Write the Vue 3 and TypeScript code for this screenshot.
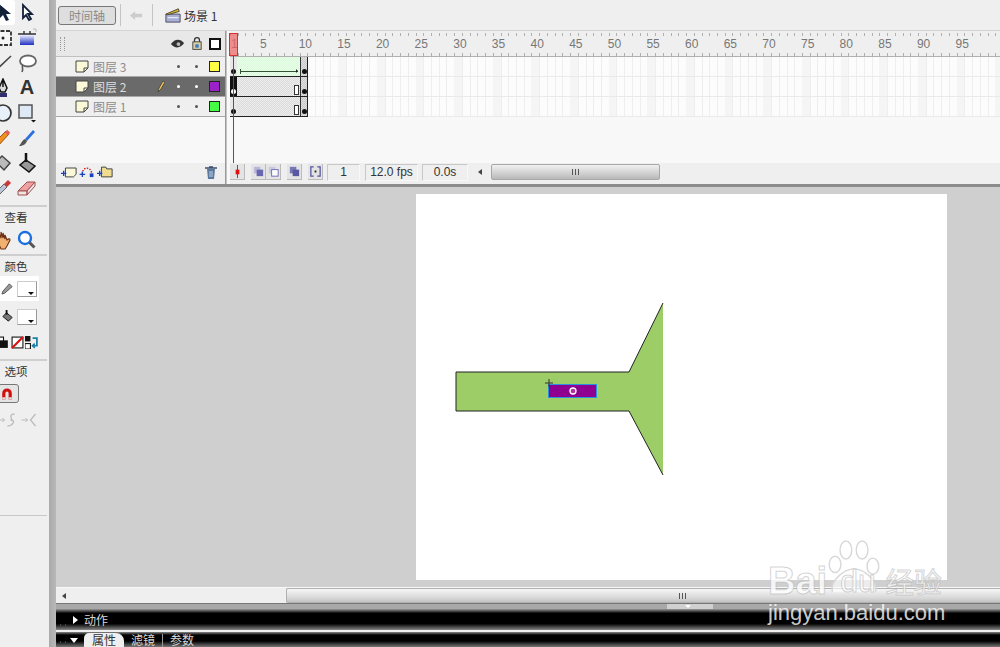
<template>
  <div class="app">
    <!-- tools -->
    <aside class="tools">
      <div class="tool-grid">
        <span class="tool on"><svg viewBox="0 0 20 20"><path d="M6 1v15l4-4 3 6 3-1-3-6h5z" fill="#12203a" /></svg></span>
        <span class="tool"><svg viewBox="0 0 20 20"><path d="M6 2v13l3-3 3 5 2-1-3-5h4z" fill="#fff" stroke="#12203a" stroke-width="1.800" /></svg></span>
        <span class="tool"><svg viewBox="0 0 20 20"><rect x="2" y="3" width="16" height="14" fill="#f6f6f6" stroke="#333" stroke-width="1.800" stroke-dasharray="4 1.500" /><circle cx="10" cy="10" r="1.500" fill="#222" /></svg></span>
        <span class="tool"><svg viewBox="0 0 20 20"><rect x="3" y="7" width="14" height="10" fill="url(#grad)" /><path d="M1 6h18M7 3v3M13 3v3" stroke="#333" stroke-width="1.400" /><path d="M16 1h3v3" fill="none" stroke="#bbb" /><defs><linearGradient id="grad" x1="0" x2="0" y1="0" y2="1"><stop offset="0" stop-color="#eef" /><stop offset="1" stop-color="#2030c0" /></linearGradient></defs></svg></span>
        <span class="tool"><svg viewBox="0 0 20 20"><path d="M1 19L18 3" stroke="#444" stroke-width="1.500" /></svg></span>
        <span class="tool"><svg viewBox="0 0 20 20"><ellipse cx="11" cy="8" rx="8" ry="5.500" fill="#fff" stroke="#666" stroke-width="1.800" /><path d="M6 12c-2 2 1 3-1 7" fill="none" stroke="#555" stroke-width="1.600" /></svg></span>
        <span class="tool"><svg viewBox="0 0 20 20"><path d="M10 1l4 9-2 4H8l-2-4zM10 2v7" fill="#ddd" stroke="#111" stroke-width="1.500" /><path d="M6 15h8v4H6z" fill="#303070" /></svg></span>
        <span class="tool letter">A</span>
        <span class="tool"><svg viewBox="0 0 20 20"><circle cx="10" cy="10" r="8" fill="#e8f0fa" stroke="#333" stroke-width="1.700" /></svg></span>
        <span class="tool"><svg viewBox="0 0 20 20"><rect x="2" y="2" width="13" height="13" fill="#dfe9f6" stroke="#555" stroke-width="1.500" /><path d="M14 17h5l-2.500 2.500z" fill="#111" /></svg></span>
        <span class="tool"><svg viewBox="0 0 20 20"><path d="M1 15L13 3l3 3L5 18l-4 1z" fill="#f09020" stroke="#a05010" /><path d="M13 3l3 3" stroke="#e06060" stroke-width="3.500" /></svg></span>
        <span class="tool"><svg viewBox="0 0 20 20"><path d="M8 11L16 2l2 2-8 9z" fill="#2a70e0" /><path d="M8 11l2 2c-1 3-4 5-8 5 2-2 3-6 6-7z" fill="#555" /></svg></span>
        <span class="tool"><svg viewBox="0 0 20 20"><path d="M9 3l8 7-6 7-8-8z" fill="#bbb" stroke="#444" stroke-width="1.500" /><path d="M3 8c-2 3-1 5 0 7" fill="none" stroke="#555" stroke-width="2.400" /></svg></span>
        <span class="tool"><svg viewBox="0 0 20 20"><path d="M9 7l9 6-6 6-9-7z" fill="#999" stroke="#111" stroke-width="1.500" /><path d="M9 0v9" stroke="#111" stroke-width="2.500" /></svg></span>
        <span class="tool"><svg viewBox="0 0 20 20"><path d="M2 19l2-6 7-7 3 3-7 7z" fill="#b8c4d8" stroke="#666" /><path d="M11 6l4-4 3 3-4 4z" fill="#c83838" /></svg></span>
        <span class="tool"><svg viewBox="0 0 20 20"><path d="M1 13l9-9h8l-8 9z" fill="#f0a0a0" stroke="#a05050" /><path d="M1 13h9v4H1zM10 13l8-9v4l-8 9z" fill="#efe4e4" stroke="#a05050" /></svg></span>
      </div>

      <h4 class="tool-title first">查看</h4>
      <div class="tool-grid one">
        <span class="tool"><svg viewBox="0 0 20 20"><path d="M4 10V6l2 3V3l2 5V2l2 6V3l2 6V5l2 5c2-2 3-1 3 0l-3 6-2 3H8z" fill="#f0b070" stroke="#703010" stroke-width="1.100" /></svg></span>
        <span class="tool"><svg viewBox="0 0 20 20"><circle cx="8" cy="8" r="6" fill="#fff" stroke="#1a70e0" stroke-width="2.400" /><path d="M12.500 12.500l5 5" stroke="#555" stroke-width="3" /></svg></span>
      </div>

      <h4 class="tool-title">颜色</h4>
      <div class="color-row white">
        <svg class="mini" viewBox="0 0 14 14"><path d="M2 10l7-8 3 3-8 7-3 1z" fill="#999" stroke="#555" /></svg>
        <span class="swatch"></span>
      </div>
      <div class="color-row">
        <svg class="mini" viewBox="0 0 14 14"><path d="M6 3l6 5-4 4-6-5z" fill="#777" stroke="#111" /><path d="M6 0v5" stroke="#111" stroke-width="2" /></svg>
        <span class="swatch"></span>
      </div>
      <div class="mini-row">
        <svg class="mini" viewBox="0 0 12 12"><rect x="-2" y="1" width="8" height="8" fill="#fff" stroke="#111" /><rect x="1" y="4" width="9" height="7" fill="#111" /></svg>
        <svg class="mini" viewBox="0 0 12 12"><rect x="1" y="1" width="10" height="10" fill="#fff" stroke="#111" /><path d="M1 11L11 1" stroke="#e01010" stroke-width="2" /></svg>
        <svg class="mini" viewBox="0 0 12 12"><rect x="0" y="0" width="5" height="5" fill="#111" /><rect x="0" y="7" width="5" height="5" fill="#fff" stroke="#111" /><path d="M7 2h4v7H7M9 7l-2 2 2 2" fill="none" stroke="#1880a8" stroke-width="1.600" /></svg>
      </div>

      <h4 class="tool-title options">选项</h4>
      <span class="magnet">
        <svg viewBox="0 0 20 20"><path d="M4 17V9a6 6 0 0 1 12 0v8h-4V9a2 2 0 0 0-4 0v8z" fill="#d01010" /><path d="M4 14h4v3H4zM12 14h4v3h-4z" fill="#ddd" /></svg>
      </span>
      <div class="gray-row">
        <svg viewBox="0 0 20 14"><path d="M0 7h6M4 5l2 2-2 2" stroke="#bbb" fill="none" /><path d="M16 1c-7 0-1 6-4 6 6 0 2 6-3 6" stroke="#bbb" fill="none" stroke-width="1.300" /></svg>
        <svg viewBox="0 0 20 14"><path d="M1 7h6M5 5l2 2-2 2" stroke="#bbb" fill="none" /><path d="M15 1L10 7l5 6" stroke="#bbb" fill="none" stroke-width="1.300" /></svg>
      </div>
      <hr class="tool-end" />
    </aside>

    <div class="splitter"></div>

    <main class="main">
      <!-- edit bar -->
      <header class="editbar">
        <button class="tl-btn">时间轴</button>
        <i class="vsep"></i>
        <svg class="back" viewBox="0 0 16 12"><path d="M1 6l6-5v3h8v4H7v3z" fill="#ccc" /></svg>
        <i class="vsep"></i>
        <svg class="scene-icon" viewBox="0 0 18 18"><path d="M1 8h16v9H1z" fill="#a8b0d8" stroke="#445" /><path d="M1 8L15 2l1 3L2 9z" fill="#d8b030" stroke="#443" /><path d="M3 12h12" stroke="#fff" /></svg>
        <span class="scene">场景 1</span>
      </header>

      <!-- timeline -->
      <section class="timeline">
        <div class="tl-left">
          <div class="layer-head">
            <i class="grip"></i>
            <svg class="eye" viewBox="0 0 16 10"><path d="M1 5c4-6 10-6 14-1-4 6-10 6-14 1z" fill="#333" /><circle cx="9" cy="5" r="2" fill="#bbb" /></svg>
            <svg class="lock" viewBox="0 0 12 14"><rect x="1" y="5" width="10" height="9" fill="#d8d0a0" stroke="#333" /><path d="M3 5V3a3 3 0 0 1 6 0v2" fill="none" stroke="#333" stroke-width="1.500" /><rect x="4" y="8" width="4" height="4" fill="#3878c8" /></svg>
            <span class="outline-all"></span>
          </div>
          <div v-for="l in layers" :key="l.name" class="layer" :class="{ active: l.active }">
            <svg class="page" viewBox="0 0 14 13"><path d="M1 1h12v7l-4 4H1z" fill="#fbf8d8" stroke="#444" /><path d="M9 12V8h4" fill="none" stroke="#444" /></svg>
            <span class="layer-name">{{ l.name }}</span>
            <svg v-if="l.active" class="pencil" viewBox="0 0 8 13"><path d="M1 12l1-4 4-7 2 1-4 7z" fill="#e8c060" stroke="#333" stroke-width=".7" /></svg>
            <b class="dot"></b>
            <b class="dot"></b>
            <span class="swatch-sq" :style="{ background: l.color }"></span>
          </div>
          <div class="layer-fill"></div>
          <div class="layer-tools">
            <svg viewBox="0 0 18 13"><path d="M5 2h12v7l-3 3H5z" fill="#fbf8d8" stroke="#333" /><path d="M0 8h6M3 5v6" stroke="#1840c0" stroke-width="1.500" /></svg>
            <svg viewBox="0 0 16 13"><path d="M3 9C3 1 11 0 13 7" fill="none" stroke="#d01010" stroke-dasharray="1.500 1.500" stroke-width="1.500" /><path d="M0 9h6M3 6v6" stroke="#1840c0" stroke-width="1.400" /><rect x="11" y="8" width="4" height="4" fill="#1840c0" /></svg>
            <svg viewBox="0 0 18 13"><path d="M5 1h5l1 2h6v9H5z" fill="#f0dc90" stroke="#333" /><path d="M0 8h6M3 5v6" stroke="#1840c0" stroke-width="1.500" /></svg>
            <svg class="trash" viewBox="0 0 12 13"><path d="M2 3h8l-1 10H3z" fill="#5878a0" /><path d="M0 2h12M4 1h4" stroke="#3c5070" stroke-width="1.300" /><path d="M5 5v6M7 5v6" stroke="#c8d4e0" /></svg>
          </div>
        </div>

        <div class="tl-right">
          <div class="ruler">
            <span class="ruler-one">1</span>
            <span v-for="n in rulerMarks" :key="n" class="mark">{{ n }}</span>
          </div>
          <div v-for="l in layers" :key="l.name" class="frames">
            <div class="span-block">
              <div class="first-frame" :class="{ black: l.active }"><i></i></div>
              <div class="span-body" :class="{ tween: l.tween }">
                <i v-if="l.tween" class="arrow"></i>
                <i v-else class="hold"></i>
              </div>
              <div class="last-frame"><i></i></div>
            </div>
          </div>
          <div class="frames-fill"></div>
          <div class="tl-status">
            <span class="st-btn"><svg viewBox="0 0 14 14"><path d="M7 0v14" stroke="#e01010" /><rect x="5" y="5" width="4" height="5" fill="#e01010" /></svg></span>
            <span class="st-gap"></span>
            <span class="st-btn"><svg viewBox="0 0 14 14"><rect x="2" y="2" width="7" height="7" fill="#b8b8d8" /><rect x="5" y="5" width="7" height="7" fill="#6868b0" /></svg></span>
            <span class="st-btn"><svg viewBox="0 0 14 14"><rect x="2" y="2" width="7" height="7" fill="#c8c8e0" /><rect x="5" y="5" width="7" height="7" fill="#fff" stroke="#6868b0" /></svg></span>
            <span class="st-gap"></span>
            <span class="st-btn"><svg viewBox="0 0 14 14"><rect x="2" y="2" width="7" height="7" fill="#7878b8" /><rect x="5" y="5" width="7" height="7" fill="#5858a0" /></svg></span>
            <span class="st-gap"></span>
            <span class="st-btn"><svg viewBox="0 0 14 14"><path d="M5 2H2v10h3M9 2h3v10H9" fill="none" stroke="#5050a0" stroke-width="1.300" /><rect x="6" y="6" width="2" height="2" fill="#222" /></svg></span>
            <span class="field w33">1</span>
            <span class="field w53">12.0 fps</span>
            <span class="field w45">0.0s</span>
            <i class="arrow-left"></i>
            <span class="thumb wide"><i class="ticks"></i></span>
          </div>
          <!-- playhead lies over the frames -->
          <i class="head"></i>
          <i class="head-line"></i>
        </div>
      </section>

      <!-- stage -->
      <section class="stage">
        <div class="canvas">
          <svg class="drawing" viewBox="0 0 531 386">
            <polygon points="40,178 213,178 247,109 247,281 213,217 40,217" fill="#9ccd66" />
            <polyline points="247,109 213,178 40,178 40,217 213,217 247,281" fill="none" stroke="#222" />
            <rect x="132.500" y="190.500" width="48" height="13" fill="#8f0090" stroke="#2a90e0" />
            <circle cx="157" cy="197" r="3" fill="#b030a0" stroke="#fff" stroke-width="1.300" />
            <path d="M133 185v8M129 189h8" stroke="#333" />
          </svg>
        </div>
      </section>
      <div class="h-scroll">
        <i class="arrow-left"></i>
        <span class="thumb-h"><i class="ticks"></i></span>
      </div>

      <div class="collapse-bar"><span class="collapse-tab"></span></div>

      <!-- panels -->
      <div class="panel">
        <i class="dots"></i>
        <i class="tri-right"></i>
        <span class="panel-title">动作</span>
      </div>
      <div class="panel props">
        <i class="dots"></i>
        <i class="tri-down"></i>
        <span class="tab-on">属性</span>
        <span class="tab-off">滤镜</span>
        <i class="tab-sep"></i>
        <span class="tab-off">参数</span>
      </div>

      <!-- watermark -->
      <div class="watermark">
        <svg class="paw" viewBox="0 0 60 62">
          <g fill="#fff" fill-opacity=".6" stroke="#d8d8d8" stroke-width="1.600">
            <ellipse cx="9" cy="27" rx="6.500" ry="9" />
            <ellipse cx="21" cy="11" rx="6.500" ry="10" />
            <ellipse cx="39" cy="11" rx="6.500" ry="10" />
            <ellipse cx="51" cy="29" rx="6.500" ry="9" />
            <path d="M6 58c-3-14 14-26 24-26s27 12 24 26" />
          </g>
        </svg>
        <div class="wm-logo">
          <span class="bai">Bai</span>
          <span class="du">du</span>
          <span class="wm-cn">经验</span>
        </div>
        <div class="wm-url">jingyan.baidu.com</div>
      </div>
    </main>
  </div>
</template>

<script setup lang="ts">
interface Layer {
  name: string;
  color: string;
  active: boolean;
  tween: boolean;
}

const layers: Layer[] = [
  { name: '图层 3', color: '#ffff44', active: false, tween: true },
  { name: '图层 2', color: '#9a22c8', active: true, tween: false },
  { name: '图层 1', color: '#44ff44', active: false, tween: false }
];

const rulerMarks: number[] = [];
for (let n = 5; n <= 95; n += 5) rulerMarks.push(n);
</script>

<style>
html, body { margin: 0; background: #efefef; }
</style>

<style scoped>
.app {
  width: 1000px;
  height: 647px;
  display: flex;
  overflow: hidden;
  font-family: "Noto Sans CJK SC", "Liberation Sans", sans-serif;
  font-size: 12px;
  color: #333;
  background: #efefef;
}

/* tools */
.tools {
  width: 49px;
  flex: none;
  overflow: hidden;
  display: flex;
  flex-direction: column;
  background: #efefef;
}
.tool-grid {
  display: grid;
  grid-template-columns: 24px 24px;
  grid-auto-rows: 25px;
  margin-left: -9px;
}
.tool-grid.one { margin-bottom: 2px; }
.tool {
  display: flex;
  align-items: center;
  justify-content: center;
  width: 24px;
  height: 25px;
}
.tool svg { width: 20px; height: 20px; flex: none; }
.tool.on { background: #fff; border-radius: 0 3px 3px 0; }
.letter {
  font: bold 20px "Liberation Sans", sans-serif;
  color: #333;
}
.tool-title {
  margin: 0 2px 0 0;
  padding-right: 15px;
  border-top: 2px solid #cfcfcf;
  height: 20px;
  line-height: 20px;
  text-align: center;
  font-size: 11.500px;
  font-weight: normal;
  color: #333;
}
.tool-title.first { margin-top: 5px; }
.tool-title.options { margin-top: 7px; }
.color-row {
  height: 25px;
  display: flex;
  align-items: center;
  gap: 3px;
  padding-left: 1px;
  margin-bottom: 3px;
}
.color-row.white { background: #fff; width: 38px; }
.mini { width: 13px; height: 13px; flex: none; }
.swatch {
  position: relative;
  width: 18px;
  height: 14px;
  background: #fff;
  border: 1px solid #ccc;
  border-right-color: #999;
  border-bottom-color: #999;
}
.swatch::after {
  content: "";
  position: absolute;
  right: 2px;
  bottom: 1px;
  border: 3px solid transparent;
  border-top-color: #111;
  border-bottom: 0;
}
.mini-row {
  display: flex;
  gap: 1px;
  margin-left: -3px;
  height: 20px;
  align-items: center;
}
.magnet {
  width: 22px;
  height: 17px;
  margin-left: -5px;
  margin-top: 3px;
  border: 1px solid #777;
  border-radius: 3px;
  background: #e4e4e4;
  display: flex;
  align-items: center;
  justify-content: center;
}
.magnet svg { width: 16px; height: 16px; }
.gray-row {
  display: flex;
  margin-top: 10px;
  gap: 1px;
  margin-left: -2px;
}
.gray-row svg { width: 21px; height: 14px; flex: none; }
.tool-end {
  margin: 88px 2px 0 0;
  border: 0;
  border-top: 1px solid #c8c8c8;
}

.splitter {
  width: 7px;
  flex: none;
  background: linear-gradient(to right, #aaa, #b8b8b8);
}

/* main */
.main {
  position: relative;
  flex: 1;
  min-width: 0;
  display: flex;
  flex-direction: column;
}
.editbar {
  height: 31px;
  flex: none;
  display: flex;
  align-items: center;
  padding-left: 2px;
  background: #efefef;
  border-bottom: 1px solid #d4d4d4;
  box-sizing: border-box;
}
.tl-btn {
  width: 58px;
  height: 19px;
  padding: 0;
  border: 1px solid #777;
  border-radius: 3px;
  background: #dedede;
  color: #8a8a8a;
  font: 12px "Noto Sans CJK SC", sans-serif;
}
.vsep {
  width: 1px;
  height: 22px;
  margin: 0 5px 0 4px;
  background: #c4c4c4;
}
.back { width: 14px; height: 11px; margin: 0 5px 0 3px; }
.scene-icon { width: 16px; height: 16px; margin-left: 7px; }
.scene { margin-left: 3px; font-size: 12px; color: #333; }

/* timeline */
.timeline {
  height: 153px;
  flex: none;
  display: flex;
  border-bottom: 3px solid #8c8c8c;
  background: #f5f5f5;
}
.tl-left {
  width: 169px;
  flex: none;
  display: flex;
  flex-direction: column;
  border-right: 1px solid #9a9a9a;
}
.layer-head {
  height: 26px;
  flex: none;
  display: flex;
  align-items: center;
  border-bottom: 1px solid #c0c0c0;
  background: #e8e8e8;
  box-sizing: border-box;
}
.grip {
  width: 3px;
  height: 14px;
  margin-left: 4px;
  border-left: 1px dotted #999;
  border-right: 1px dotted #999;
}
.eye { width: 15px; height: 10px; margin-left: auto; }
.lock { width: 10px; height: 13px; margin-left: 7px; }
.outline-all {
  width: 8px;
  height: 8px;
  margin: 0 4px 0 7px;
  border: 2px solid #111;
  background: #fff;
}
.layer {
  height: 20px;
  flex: none;
  display: flex;
  align-items: center;
  padding: 0 5px 0 19px;
  border-bottom: 1px solid #a8a8a8;
  box-sizing: border-box;
  background: #efefef;
  color: #8c8c8c;
}
.layer.active { background: #6a6a6a; color: #ddd; }
.page { width: 14px; height: 13px; flex: none; }
.layer-name { margin-left: 4px; font-size: 12px; white-space: nowrap; }
.pencil { position: absolute; left: 101px; width: 8px; height: 13px; }
.dot {
  width: 3px;
  height: 3px;
  border-radius: 50%;
  background: #555;
}
.active .dot { background: #fff; }
.layer-name + .dot,
.pencil + .dot { margin-left: auto; }
.dot + .dot { margin-left: 15px; }
.swatch-sq {
  width: 9px;
  height: 9px;
  margin-left: 11px;
  border: 1px solid #222;
}
.layer-fill { flex: 1; background: #f8f8f8; }
.layer-tools {
  height: 21px;
  flex: none;
  display: flex;
  align-items: center;
  gap: 2px;
  padding: 0 0 3px 5px;
  box-sizing: border-box;
  background: #efefef;
}
.layer-tools svg { width: 16px; height: 12px; }
.layer-tools .trash { margin-left: auto; margin-right: 8px; width: 12px; height: 13px; }

.tl-right {
  position: relative;
  flex: 1;
  min-width: 0;
  display: flex;
  flex-direction: column;
  padding-left: 3px;
  border-left: 1px solid #c4c4c4;
  background: #f8f8f8;
}
.ruler {
  height: 26px;
  flex: none;
  display: flex;
  align-items: center;
  font: 12px "Liberation Sans", sans-serif;
  color: #777;
  background:
    repeating-linear-gradient(to right, #b0b0b0 0 1px, transparent 1px 7.730px) 0 2px / 100% 3px no-repeat,
    repeating-linear-gradient(to right, #b0b0b0 0 1px, transparent 1px 7.730px) 0 100% / 100% 3px no-repeat,
    #efefef;
  border-bottom: 1px solid #b0b0b0;
  box-sizing: border-box;
}
.ruler-one {
  width: 29px;
  padding-left: 1px;
  box-sizing: border-box;
  flex: none;
}
.mark {
  width: 38.650px;
  flex: none;
  text-align: left;
  padding-left: 1px;
  box-sizing: border-box;
}
.head {
  position: absolute;
  left: 2px;
  top: 2px;
  width: 7px;
  height: 21px;
  background: rgba(240, 100, 100, .7);
  border: 1px solid #d83030;
}
.head-line {
  position: absolute;
  left: 6px;
  top: 25px;
  width: 1px;
  height: 107px;
  background: #e81818;
}
.frames {
  height: 20px;
  flex: none;
  box-sizing: border-box;
  border-bottom: 1px solid #eaeaea;
  background:
    repeating-linear-gradient(to right, transparent 0 30.920px, #f5f5f5 30.920px 38.650px),
    repeating-linear-gradient(to right, #eeeeee 0 1px, #fcfcfc 1px 7.730px);
}
.span-block {
  width: 78px;
  height: 20px;
  display: flex;
  border-bottom: 1px solid #222;
  box-sizing: border-box;
}
.first-frame {
  width: 7px;
  flex: none;
  position: relative;
  background: #e8e8e8;
}
.first-frame.black { background: #111; }
.first-frame i,
.last-frame i {
  position: absolute;
  left: 1px;
  bottom: 2px;
  width: 5px;
  height: 5px;
  border-radius: 50%;
  background: #111;
}
.first-frame.black i { background: #fff; }
.span-body {
  position: relative;
  flex: 1;
  background: repeating-conic-gradient(#dadada 0 25%, #eeeeee 0 50%) 0 0 / 2px 2px;
}
.span-body.tween {
  background: repeating-conic-gradient(#dcf8dc 0 25%, #e8ffe8 0 50%) 0 0 / 2px 2px;
}
.arrow {
  position: absolute;
  left: 3px;
  right: 2px;
  bottom: 4px;
  height: 1px;
  background: #335533;
}
.arrow::before {
  content: "";
  position: absolute;
  left: 0;
  top: -2px;
  width: 1px;
  height: 5px;
  background: #335533;
}
.arrow::after {
  content: "";
  position: absolute;
  right: 0;
  top: -2px;
  border: 2.500px solid transparent;
  border-left-color: #222;
  border-right: 0;
}
.hold {
  position: absolute;
  right: 1px;
  bottom: 1px;
  width: 3px;
  height: 8px;
  background: #fff;
  border: 1px solid #333;
}
.last-frame {
  position: relative;
  width: 8px;
  flex: none;
  box-sizing: border-box;
  border-left: 1px solid #333;
  border-right: 1px solid #222;
  background: repeating-conic-gradient(#c8c8c8 0 25%, #e0e0e0 0 50%) 0 0 / 2px 2px;
}
.frames-fill {
  flex: 1;
  background: #f8f8f8;
}
.tl-status {
  height: 21px;
  flex: none;
  display: flex;
  align-items: center;
  padding-bottom: 3px;
  box-sizing: border-box;
  background: #efefef;
  font: 12px "Liberation Sans", sans-serif;
  color: #333;
}
.st-btn {
  width: 14px;
  height: 15px;
  flex: none;
  display: flex;
  align-items: center;
  justify-content: center;
  background: #e4e4e4;
  border-right: 1px solid #bbb;
  border-bottom: 1px solid #bbb;
}
.st-btn svg { width: 13px; height: 13px; }
.st-gap { width: 6px; flex: none; }
.field {
  height: 15px;
  line-height: 15px;
  margin-left: 4px;
  text-align: center;
  border: 1px solid #c8c8c8;
  border-right-color: #f8f8f8;
  border-bottom-color: #f8f8f8;
  flex: none;
}
.w33 { width: 31px; }
.w53 { width: 51px; margin-left: 5px; }
.w45 { width: 44px; }
.arrow-left {
  flex: none;
  margin-left: 10px;
  border: 3px solid transparent;
  border-right: 4px solid #444;
  border-left: 0;
}
.thumb {
  display: flex;
  align-items: center;
  justify-content: center;
  flex: none;
  margin-left: 9px;
  height: 14px;
  border: 1px solid #a8a8a8;
  border-radius: 2px;
  background: linear-gradient(#f0f0f0, #d0d0d0 60%, #b8b8b8);
}
.thumb.wide { width: 167px; }
.ticks {
  width: 5px;
  height: 6px;
  border-left: 1px solid #555;
  border-right: 1px solid #555;
  position: relative;
}
.ticks::after {
  content: "";
  position: absolute;
  left: 2px;
  top: 0;
  width: 1px;
  height: 6px;
  background: #555;
}

/* stage */
.stage {
  flex: 1;
  min-height: 0;
  padding: 7px 53px 0 360px;
  background: #cfcfcf;
  overflow: hidden;
}
.canvas {
  width: 531px;
  height: 386px;
  background: #fff;
}
.drawing { display: block; width: 531px; height: 386px; }
.h-scroll {
  height: 16px;
  flex: none;
  display: flex;
  align-items: center;
  background: #efefef;
  border-top: 1px solid #f8f8f8;
  box-sizing: border-box;
}
.h-scroll .arrow-left { margin-left: 6px; }
.thumb-h {
  margin-left: 220px;
  flex: 1;
  height: 15px;
  display: flex;
  align-items: center;
  padding-left: 392px;
  border: 1px solid #b0b0b0;
  border-right: 0;
  border-radius: 2px 0 0 2px;
  background: linear-gradient(#f6f6f6, #dcdcdc 60%, #c4c4c4);
  box-sizing: border-box;
}
.collapse-bar {
  height: 6px;
  flex: none;
  background: #a8a8a8;
  border-top: 1px solid #777;
  box-sizing: border-box;
  padding-left: 611px;
}
.collapse-tab {
  display: block;
  width: 46px;
  height: 5px;
  background: #d0d0d0;
  position: relative;
}
.collapse-tab::after {
  content: "";
  position: absolute;
  left: 18px;
  top: 1px;
  border: 3px solid transparent;
  border-top-color: #fff;
  border-bottom: 0;
}
.panel {
  height: 21px;
  flex: none;
  display: flex;
  align-items: center;
  color: #d8d8d8;
  background: linear-gradient(#999 0, #000 20%, #000 70%, #888 100%);
  box-sizing: border-box;
}
.panel.props {
  height: 15px;
  margin-top: 2px;
  align-items: flex-end;
  background: linear-gradient(#888 0, #000 20%, #000 60%, #777 100%);
}
.dots {
  width: 4px;
  height: 2px;
  margin-left: 4px;
  border-left: 1px solid #444;
  border-right: 1px solid #444;
  align-self: flex-end;
  margin-bottom: 4px;
}
.tri-right {
  margin-left: 7px;
  border: 4px solid transparent;
  border-left: 5px solid #fff;
  border-right: 0;
}
.tri-down {
  margin: 0 0 4px 4px;
  border: 4px solid transparent;
  border-top: 5px solid #fff;
  border-bottom: 0;
}
.panel-title { margin-left: 6px; font-size: 12px; }
.tab-on {
  margin-left: 6px;
  width: 40px;
  height: 14px;
  line-height: 14px;
  text-align: center;
  font-size: 12px;
  background: #efefef;
  color: #333;
  border-radius: 5px 8px 0 0;
}
.tab-off { margin-left: 7px; font-size: 12px; line-height: 14px; }
.tab-sep { width: 1px; height: 13px; margin-left: 7px; background: #999; }

/* watermark */
.watermark {
  position: absolute;
  left: 712px;
  top: 538px;
  width: 190px;
  color: rgba(255, 255, 255, .8);
  pointer-events: none;
}
.paw {
  position: absolute;
  left: 59px;
  top: 2px;
  width: 54px;
  height: 56px;
}
.wm-logo {
  position: relative;
  margin-top: 24px;
  height: 38px;
  display: flex;
  align-items: center;
  white-space: nowrap;
  -webkit-text-stroke: 1px rgba(170, 170, 170, .5);
}
.bai { font: bold 38px/38px "Liberation Sans", sans-serif; }
.du { margin-left: 13px; font: 32px/38px "Liberation Sans", sans-serif; }
.wm-cn { margin-left: 10px; font: 28px/38px "Noto Sans CJK SC", sans-serif; }
.wm-url {
  position: relative;
  margin-top: 1px;
  font: 22px/24px "Liberation Sans", sans-serif;
  white-space: nowrap;
}
</style>
